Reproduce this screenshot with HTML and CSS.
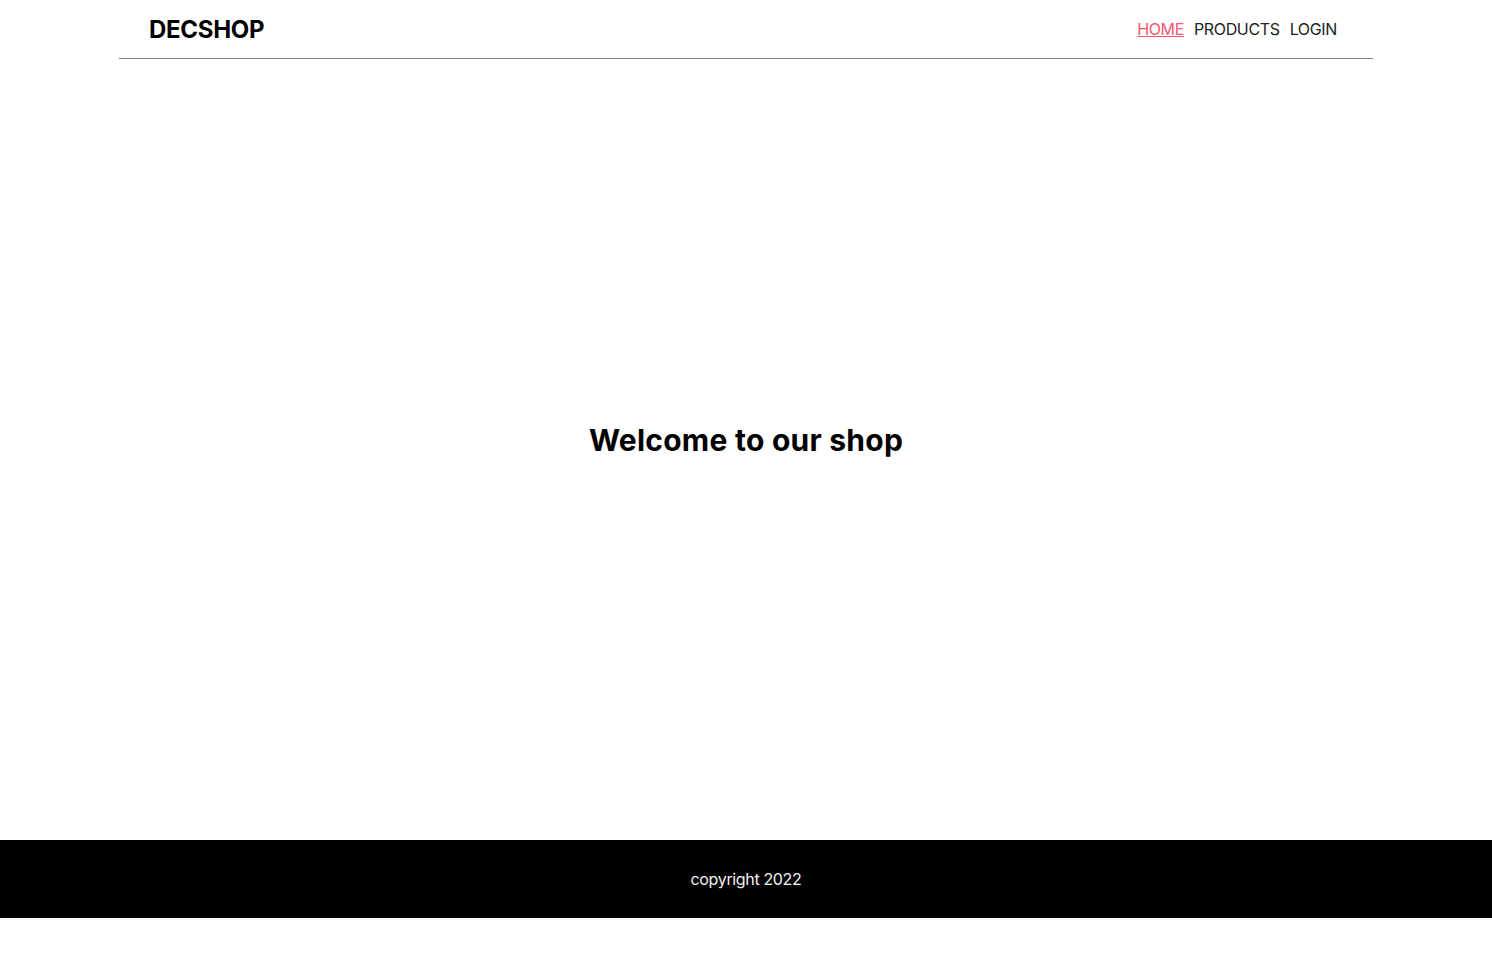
FILE: index.html
```html
<!DOCTYPE html>
<html lang="en">
<head>
<meta charset="utf-8">
<title>DECSHOP</title>
<link rel="stylesheet" href="styles.css">
</head>
<body>
<header class="header">
  <a class="logo" href="#">DECSHOP</a>
  <nav class="nav">
    <a class="nav-link active" href="#">HOME</a>
    <a class="nav-link" href="#">PRODUCTS</a>
    <a class="nav-link" href="#">LOGIN</a>
  </nav>
</header>
<main class="main">
  <h1 class="title">Welcome to our shop</h1>
</main>
<footer class="footer">
  <p class="copy">copyright 2022</p>
</footer>
</body>
</html>
```

FILE: styles.css
```css
* { box-sizing: border-box; }
body {
  margin: 0;
  font-family: Inter, "Noto Sans", sans-serif;
  color: #000;
  background: #fff;
}
.header {
  width: 1254px;
  margin: 0 auto;
  height: 59px;
  display: flex;
  align-items: center;
  justify-content: space-between;
  padding: 0 36px 0 30px;
  border-bottom: 1px solid #808080;
}
.logo {
  font-size: 24px;
  font-weight: 700;
  letter-spacing: -0.3px;
  color: #000;
  text-decoration: none;
}
.nav {
  display: flex;
  gap: 10px;
}
.nav-link {
  font-size: 16px;
  letter-spacing: -0.35px;
  color: #222;
  text-decoration: none;
}
.nav-link.active {
  color: #f3566f;
  text-decoration: underline;
}
.main {
  height: 781px;
  display: flex;
  align-items: center;
  justify-content: center;
  padding-bottom: 19px;
}
.title {
  margin: 0;
  font-size: 30px;
  letter-spacing: 0.25px;
  font-weight: 700;
}
.footer {
  background: #000;
  height: 78px;
  display: flex;
  align-items: center;
  justify-content: center;
}
.copy {
  margin: 0;
  color: #f2f2f2;
  font-size: 16px;
  letter-spacing: -0.35px;
}
```
